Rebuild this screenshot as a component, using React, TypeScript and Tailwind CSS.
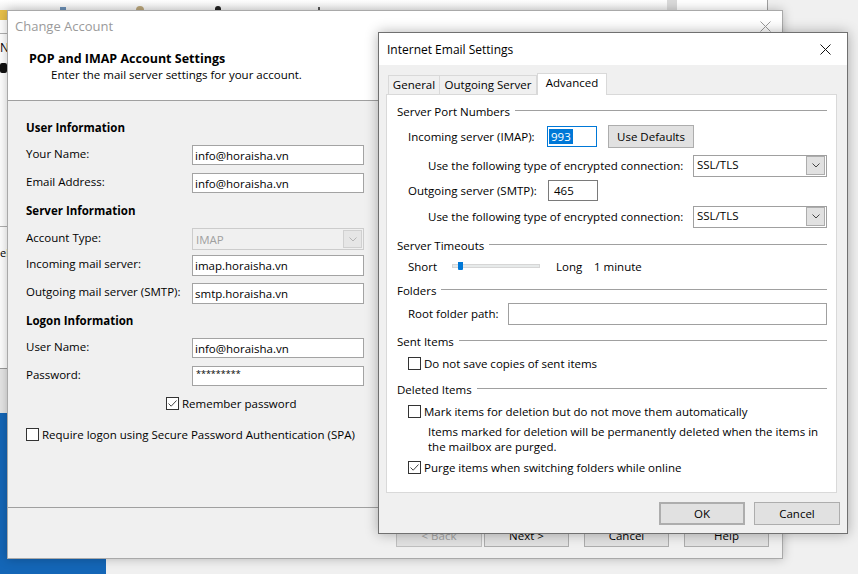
import type { ReactNode } from 'react';

function Check({ checked = false }: { checked?: boolean }) {
  return (
    <div className="flex h-[13px] w-[13px] shrink-0 items-center justify-center border border-[#333] bg-white">
      {checked && (
        <svg width="11" height="11" viewBox="0 0 11 11">
          <path d="M1.5 5.5 L4.2 8.2 L9.5 2.5" fill="none" stroke="#444" strokeWidth="1" />
        </svg>
      )}
    </div>
  );
}

function Chevron({ color = '#444' }: { color?: string }) {
  return (
    <svg width="8" height="5" viewBox="0 0 8 5">
      <path d="M0.5 0.5 L4 4 L7.5 0.5" fill="none" stroke={color} strokeWidth="1" />
    </svg>
  );
}

function CloseX({ color }: { color: string }) {
  return (
    <svg width="11" height="11" viewBox="0 0 11 11">
      <path d="M0.5 0.5 L10.5 10.5 M10.5 0.5 L0.5 10.5" stroke={color} strokeWidth="1" />
    </svg>
  );
}

function Button({ children, className = '' }: { children: ReactNode; className?: string }) {
  return (
    <div className={`flex h-[23px] items-center justify-center border border-[#adadad] bg-[#e1e1e1] ${className}`}>
      {children}
    </div>
  );
}

function TextBox({ value, className = '' }: { value: string; className?: string }) {
  return (
    <div className={`flex h-[20px] items-center border border-[#a3a3a3] bg-white pl-[2px] ${className}`}>
      {value}
    </div>
  );
}

function AccountRow({ label, children, h = 'h-[28px]', className = '' }: { label: string; children: ReactNode; h?: string; className?: string }) {
  return (
    <div className={`flex items-center ${h} ${className}`}>
      <div className="mb-[4px] w-[166px]">{label}</div>
      {children}
    </div>
  );
}

function SectionTitle({ children, className = '' }: { children: ReactNode; className?: string }) {
  return <div className={`flex h-[18px] items-center font-bold ${className}`}>{children}</div>;
}

function Group({ title, className = '' }: { title: string; className?: string }) {
  return (
    <div className={`flex h-[18px] items-center gap-[5px] ${className}`}>
      <span>{title}</span>
      <div className="mt-[-1px] h-px flex-1 bg-[#a0a0a0]" />
    </div>
  );
}

function Combo({ value }: { value: string }) {
  return (
    <div className="flex h-[22px] w-[134px] items-center border border-[#a0a0a0] bg-white pl-[3px] pr-px">
      <span className="mb-[2px] flex-1">{value}</span>
      <div className="flex h-[19px] w-[19px] items-center justify-center border border-[#adadad] bg-[#e1e1e1]">
        <Chevron />
      </div>
    </div>
  );
}

function ChangeAccount() {
  return (
    <div className="absolute left-[7px] top-[10px] flex h-[549px] w-[776px] flex-col border border-[#a9a9a9] bg-[#f0f0f0] shadow-[0_0_10px_rgba(0,0,0,0.25)]">
      <div className="flex h-[31px] shrink-0 items-center justify-between bg-white pl-[7px] pr-[11px]">
        <span className="text-[13px] text-[#9a9a9a]">Change Account</span>
        <CloseX color="#9a9a9a" />
      </div>
      <div className="h-[59px] shrink-0 border-b border-[#a0a0a0] bg-white pl-[21px] pt-[9px]">
        <div className="h-[16px] text-[12.5px] font-bold leading-[16px] text-black">POP and IMAP Account Settings</div>
        <div className="h-[15px] pl-[22px] leading-[15px]">Enter the mail server settings for your account.</div>
      </div>

      <div className="flex flex-1 flex-col pl-[18px] pt-[17px]">
        <SectionTitle>User Information</SectionTitle>
        <AccountRow label="Your Name:" className="mt-[5px]">
          <TextBox value="info@horaisha.vn" className="w-[172px]" />
        </AccountRow>
        <AccountRow label="Email Address:">
          <TextBox value="info@horaisha.vn" className="w-[172px]" />
        </AccountRow>

        <SectionTitle className="mt-[4px]">Server Information</SectionTitle>
        <AccountRow label="Account Type:" h="h-[26px]" className="mt-[7px]">
          <div className="flex h-[22px] w-[172px] items-center border border-[#cccccc] bg-[#f0f0f0] pl-[3px] pr-px text-[#a0a0a0]">
            <span className="flex-1">IMAP</span>
            <div className="flex h-[18px] w-[19px] items-center justify-center border border-[#d0d0d0] bg-[#e6e6e6]">
              <Chevron color="#b5b5b5" />
            </div>
          </div>
        </AccountRow>
        <AccountRow label="Incoming mail server:" h="h-[27px]">
          <TextBox value="imap.horaisha.vn" className="h-[21px] w-[172px]" />
        </AccountRow>
        <AccountRow label="Outgoing mail server (SMTP):">
          <TextBox value="smtp.horaisha.vn" className="h-[21px] w-[172px]" />
        </AccountRow>

        <SectionTitle className="mt-[4px]">Logon Information</SectionTitle>
        <AccountRow label="User Name:" className="mt-[5px]">
          <TextBox value="info@horaisha.vn" className="w-[172px]" />
        </AccountRow>
        <AccountRow label="Password:">
          <TextBox value="*********" className="w-[172px] items-start pl-[3px] pt-px text-[9px] leading-[12px]" />
        </AccountRow>

        <div className="flex h-[26px] items-center gap-[3px] pl-[140px]">
          <Check checked />
          <span>Remember password</span>
        </div>
        <div className="mt-[5px] flex h-[26px] items-center gap-[3px]">
          <Check />
          <span>Require logon using Secure Password Authentication (SPA)</span>
        </div>
      </div>

      <div className="flex h-[51px] shrink-0 justify-end gap-[15px] border-t border-[#a0a0a0] pr-[13px] pt-[16px]">
        <div className="flex gap-[2px]">
          <Button className="w-[86px] border-[#bfbfbf] bg-[#cccccc] text-[#a0a0a0]">&lt; Back</Button>
          <Button className="w-[85px]">Next &gt;</Button>
        </div>
        <Button className="w-[85px]">Cancel</Button>
        <Button className="w-[85px]">Help</Button>
      </div>
    </div>
  );
}

function Tab({ label, selected = false, className = '' }: { label: string; selected?: boolean; className?: string }) {
  return (
    <div
      className={
        selected
          ? `relative z-10 mb-[-1px] flex h-[22px] items-start justify-center border border-b-0 border-[#d9d9d9] bg-white pt-px ${className}`
          : `flex h-[19px] items-center justify-center border border-b-0 border-[#d9d9d9] bg-[#f0f0f0] pb-px ${className}`
      }
    >
      {label}
    </div>
  );
}

function EmailSettings() {
  return (
    <div className="absolute left-[378px] top-[32px] flex h-[502px] w-[470px] flex-col border border-[#707070] bg-[#f0f0f0] shadow-[0_0_12px_rgba(0,0,0,0.3)]">
      <div className="flex h-[32px] shrink-0 items-center justify-between bg-white pl-[8px] pr-[16px]">
        <span className="text-[12px]">Internet Email Settings</span>
        <CloseX color="#111" />
      </div>

      <div className="flex flex-col pl-[7px] pt-[8px]">
        <div className="flex h-[21px] items-end pl-[2px]">
          <Tab label="General" className="w-[52px]" />
          <Tab label="Outgoing Server" className="w-[97px] border-l-0" />
          <Tab label="Advanced" selected className="w-[70px]" />
        </div>

        <div className="flex h-[399px] w-[451px] flex-col border border-[#d9d9d9] bg-white pl-[10px] pr-[9px] pt-[7px]">
          <Group title="Server Port Numbers" />
          <div className="mt-[4px] flex h-[24px] items-center pl-[11px]">
            <span className="w-[139px]">Incoming server (IMAP):</span>
            <div className="flex h-[21px] w-[50px] items-center border border-[#0078d7] bg-white pl-px">
              <span className="bg-[#0078d7] px-[2px] leading-[15px] text-white">993</span>
            </div>
            <Button className="ml-[11px] h-[22px] w-[86px]">Use Defaults</Button>
          </div>
          <div className="mt-[5px] flex h-[25px] items-center pl-[31px]">
            <span className="w-[265px]">Use the following type of encrypted connection:</span>
            <Combo value="SSL/TLS" />
          </div>
          <div className="flex h-[25px] items-center pl-[11px]">
            <span className="w-[140px]">Outgoing server (SMTP):</span>
            <div className="flex h-[21px] w-[50px] items-center border border-[#7a7a7a] bg-white pl-[5px]">465</div>
          </div>
          <div className="flex h-[27px] items-center pl-[31px]">
            <span className="w-[265px]">Use the following type of encrypted connection:</span>
            <Combo value="SSL/TLS" />
          </div>

          <Group title="Server Timeouts" className="mt-[6px]" />
          <div className="flex h-[24px] items-center pl-[11px]">
            <span className="w-[44px]">Short</span>
            <div className="relative flex h-[10px] w-[88px] items-center">
              <div className="h-[4px] w-full border border-[#d6d6d6] bg-[#e7eaea]" />
              <div className="absolute left-[6px] top-[1px] h-[8px] w-[5px] rounded-b-[1px] bg-[#0078d7]" />
            </div>
            <span className="ml-[16px] w-[38px]">Long</span>
            <span>1 minute</span>
          </div>

          <Group title="Folders" className="mt-[3px]" />
          <div className="mt-[3px] flex h-[23px] items-center pl-[11px]">
            <span className="w-[100px]">Root folder path:</span>
            <div className="h-[22px] flex-1 border border-[#a0a0a0] bg-white" />
          </div>

          <Group title="Sent Items" className="mt-[7px]" />
          <div className="mt-px flex h-[24px] items-center gap-[3px] pl-[11px]">
            <Check />
            <span>Do not save copies of sent items</span>
          </div>

          <Group title="Deleted Items" className="mt-[5px]" />
          <div className="mt-px flex h-[24px] items-center gap-[3px] pl-[11px]">
            <Check />
            <span>Mark items for deletion but do not move them automatically</span>
          </div>
          <div className="mt-px h-[30px] pl-[31px] leading-[15px]">
            <div className="whitespace-nowrap">Items marked for deletion will be permanently deleted when the items in</div>
            <div>the mailbox are purged.</div>
          </div>
          <div className="mt-px flex h-[24px] items-center gap-[3px] pl-[11px]">
            <Check checked />
            <span>Purge items when switching folders while online</span>
          </div>
        </div>

        <div className="mt-[9px] flex justify-end gap-[9px] pr-[7px]">
          <Button className="w-[86px] border-2 border-[#0078d7]">OK</Button>
          <Button className="w-[86px]">Cancel</Button>
        </div>
      </div>
    </div>
  );
}

function Backdrop() {
  return (
    <>
      {/* top toolbar of the app behind */}
      <div className="absolute left-0 top-0 h-[11px] w-[667px] bg-gradient-to-b from-white to-[#efefef]" />
      <div className="absolute left-[667px] top-0 h-[11px] w-[10px] bg-[#dadada]" />
      <div className="absolute left-[677px] top-0 h-[11px] w-[90px] bg-white" />
      <div className="absolute left-[767px] top-0 h-[11px] w-px bg-[#a0a0a0]" />
      <div className="absolute left-[60px] top-[7px] h-[3px] w-[6px] bg-[#6b8fb5]" />
      <div className="absolute left-[136px] top-[6px] h-[4px] w-[8px] rounded-t-full bg-[#b9a57a]" />
      <div className="absolute left-[215px] top-[6px] h-[4px] w-[6px] rounded-t-full bg-[#222]" />
      <div className="absolute left-[318px] top-[7px] h-[3px] w-[2px] bg-[#555]" />

      {/* left edge of the app behind */}
      <div className="absolute left-0 top-[11px] h-[357px] w-[7px] bg-white" />
      <div className="absolute left-0 top-[10px] h-[10px] w-[7px] bg-[#e8c04a]" />
      <div className="absolute left-0 top-[33px] h-px w-[7px] bg-[#b0b0b0]" />
      <div className="absolute left-0 top-[40px] text-[12px] leading-[15px]">N</div>
      <div className="absolute left-0 top-[63px] h-[10px] w-[7px] rounded-[2px] bg-[#111]" />
      <div className="absolute left-0 top-[226px] h-px w-[7px] bg-[#b0b0b0]" />
      <div className="absolute left-0 top-[245px] w-[7px] overflow-hidden text-[11px] leading-[15px]">el</div>
      <div className="absolute left-0 top-[368px] h-[45px] w-[7px] border-t border-[#9a9a9a] bg-[#e6e6e6]" />
      <div className="absolute left-0 top-[413px] h-[161px] w-[106px] bg-[#1466b7]" />
    </>
  );
}

export default function App() {
  return (
    <div className="relative h-[574px] w-[858px] overflow-hidden bg-[#f0f0f0] font-['Open_Sans',sans-serif] text-[11.5px] leading-[15px] text-black">
      <Backdrop />
      <ChangeAccount />
      <EmailSettings />
    </div>
  );
}
